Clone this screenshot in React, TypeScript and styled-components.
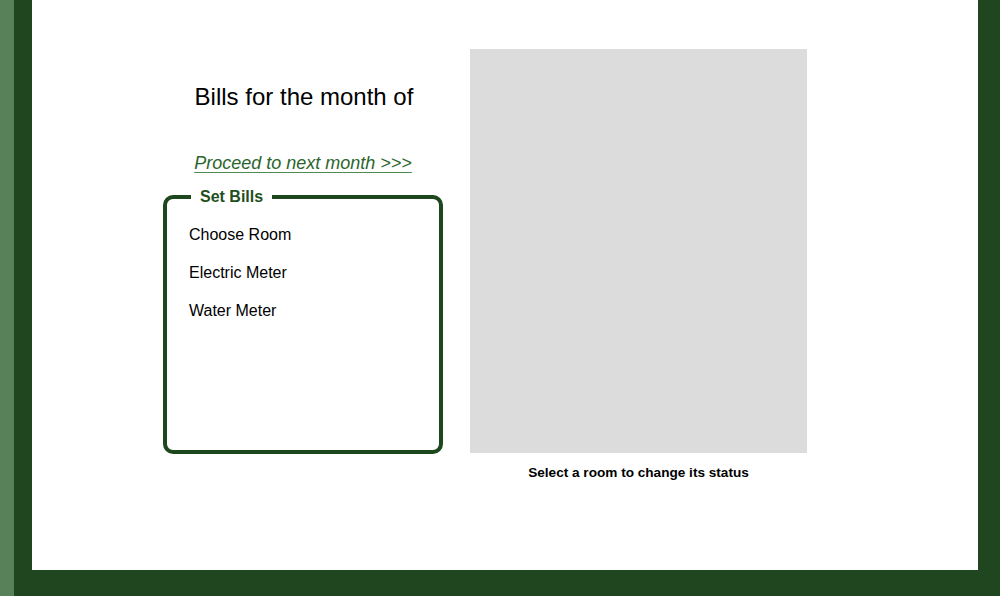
import styled, { createGlobalStyle } from 'styled-components';

const GlobalStyle = createGlobalStyle`
  html, body {
    margin: 0;
    padding: 0;
    font-family: "Liberation Sans", Arial, sans-serif;
  }
`;

const rows = ['Choose Room', 'Electric Meter', 'Water Meter'];

const App = () => {
  return (
    <>
      <GlobalStyle />
      <Page>
        <SideStrip />
        <Frame>
          <Main>
            <LeftColumn>
              <Title>Bills for the month of</Title>
              <NextLink href="#">Proceed to next month &gt;&gt;&gt;</NextLink>
              <BillsBox>
                <Legend>Set Bills</Legend>
                <BillsList>
                  {rows.map((row) => (
                    <BillRow key={row}>{row}</BillRow>
                  ))}
                </BillsList>
              </BillsBox>
            </LeftColumn>
            <RightColumn>
              <RoomMap />
              <Caption>Select a room to change its status</Caption>
            </RightColumn>
          </Main>
        </Frame>
      </Page>
    </>
  );
};

const Page = styled.div`
  display: flex;
  width: 1000px;
  height: 596px;
  background: #1f461e;
`;

const SideStrip = styled.div`
  width: 14px;
  flex-shrink: 0;
  background: #58815a;
`;

const Frame = styled.div`
  flex: 1;
  padding: 0 22px 26px 18px;
  display: flex;
`;

const Main = styled.main`
  flex: 1;
  background: #fff;
  display: flex;
  align-items: flex-start;
  gap: 27px;
  padding: 49px 0 0 131px;
`;

const LeftColumn = styled.section`
  width: 280px;
  display: flex;
  flex-direction: column;
  align-items: center;
`;

const Title = styled.h1`
  margin: 34px 0 0 2px;
  font-size: 24px;
  line-height: 28px;
  font-weight: normal;
  color: #000;
`;

const NextLink = styled.a`
  margin-top: 41px;
  font-size: 18px;
  line-height: 22px;
  font-style: italic;
  color: #2b652d;
  text-decoration: underline;
  text-underline-offset: 3px;
  text-decoration-color: #4f8a52;
`;

const BillsBox = styled.fieldset`
  align-self: stretch;
  margin: 14px 0 0;
  padding: 0 22px;
  border: 4px solid #1d481d;
  border-radius: 10px;
  min-width: 0;
`;

const Legend = styled.legend`
  margin-left: 2px;
  padding: 0 9px;
  font-size: 16px;
  line-height: 18px;
  font-weight: bold;
  color: #1f4f20;
`;

const BillsList = styled.div`
  padding-top: 10px;
  height: 244px;
  box-sizing: border-box;
`;

const BillRow = styled.div`
  height: 38px;
  line-height: 38px;
  font-size: 16px;
  color: #000;
`;

const RightColumn = styled.section`
  width: 337px;
  display: flex;
  flex-direction: column;
  align-items: center;
`;

const RoomMap = styled.div`
  width: 337px;
  height: 404px;
  background: #dcdcdc;
`;

const Caption = styled.p`
  margin: 12px 0 0;
  font-size: 13.6px;
  line-height: 16px;
  font-weight: bold;
  color: #000;
`;

export default App;
